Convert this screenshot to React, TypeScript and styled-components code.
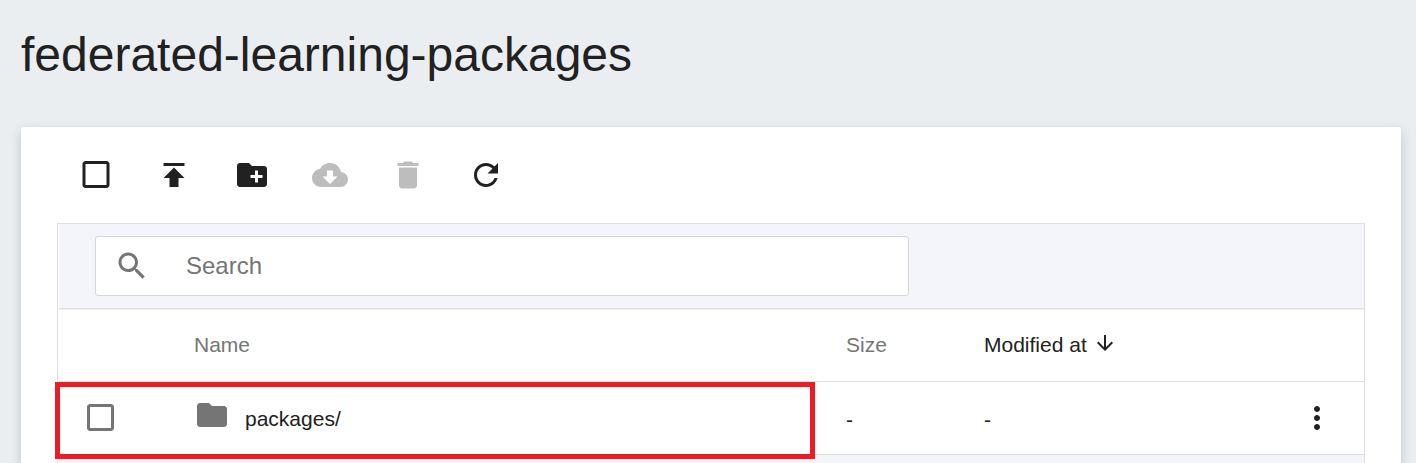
import React from "react";
import styled, { createGlobalStyle } from "styled-components";

const GlobalStyle = createGlobalStyle`
  *, *::before, *::after { box-sizing: border-box; }
  body {
    margin: 0;
    background: #eaeef1;
    color: #212121;
    font-family: "Liberation Sans", Arial, sans-serif;
  }
`;

const Page = styled.main`
  height: 463px;
  overflow: hidden;
  padding: 0 15px 0 21px;
`;

const Title = styled.h1`
  margin: 0;
  height: 127px;
  padding-top: 25px;
  font-size: 48px;
  line-height: 60px;
  font-weight: 400;
  white-space: nowrap;
`;

const Card = styled.section`
  height: 420px;
  padding: 0 36px;
  background: #fff;
  border-radius: 3px;
  box-shadow: 0 4px 12px rgba(0, 0, 0, 0.17);
`;

const Toolbar = styled.div`
  display: flex;
  gap: 42px;
  height: 96px;
  padding: 30px 21px 0;
`;

const IconSvg = styled.svg<{ $size: number }>`
  display: block;
  flex: none;
  width: ${(p) => p.$size}px;
  height: ${(p) => p.$size}px;
  fill: currentColor;
`;

const ToolButton = styled.button`
  display: block;
  width: 36px;
  height: 36px;
  padding: 0;
  border: 0;
  background: none;
  color: #212121;

  &:disabled {
    color: #bdbdbd;
  }
`;

const Table = styled.div`
  height: 300px;
  border: 1px solid #dfdfdf;
  padding-left: 1px;
`;

const SearchBar = styled.div`
  display: flex;
  height: 86px;
  padding: 12px 0 0 36px;
  background: #f4f5fa;
  border-bottom: 1px solid #efefef;
  box-shadow: inset 0 -1px 0 #dfdfdf;
`;

const SearchField = styled.label`
  display: flex;
  align-items: center;
  gap: 36px;
  width: 814px;
  height: 60px;
  padding-left: 18px;
  background: #fff;
  border: 1px solid #d6d6d6;
  border-radius: 3px;
  color: #757575;
`;

const SearchInput = styled.input`
  width: 600px;
  padding: 0;
  border: 0;
  outline: 0;
  background: none;
  font: 24px/30px "Liberation Sans", Arial, sans-serif;

  &::placeholder {
    color: #757575;
    opacity: 1;
  }
`;

const Row = styled.div<{ $height: number }>`
  position: relative;
  display: grid;
  grid-template-columns: 135px 652px 138px 1fr 65px;
  align-items: center;
  height: ${(p) => p.$height}px;
  border-bottom: 1px solid #dfdfdf;
  font-size: 21px;
  line-height: 24px;
`;

const StripedRow = styled.div`
  height: 73px;
  background: #f4f5fa;
`;

const HeaderCell = styled.div<{ $active?: boolean }>`
  display: flex;
  align-items: center;
  gap: 6px;
  padding-bottom: 2px;
  color: ${(p) => (p.$active ? "#212121" : "#757575")};
`;

const SortMark = styled.span`
  margin-bottom: 3px;
`;

const CheckCell = styled.div`
  padding: 0 0 2px 23px;
  color: #757575;
`;

const NameCell = styled.div`
  display: flex;
  align-items: center;
  gap: 15px;
`;

const FolderMark = styled.span`
  margin-bottom: 6px;
  color: #757575;
`;

const NameText = styled.span`
  padding-top: 2px;
`;

const ValueCell = styled.div`
  padding-top: 3px;
`;

const MenuCell = styled.div`
  margin-bottom: 1px;
`;

const Highlight = styled.div`
  position: absolute;
  left: -4px;
  top: 0;
  width: 760px;
  height: 77px;
  border: 5px solid #ed1c24;
  pointer-events: none;
`;

const paths = {
  checkbox:
    "M19 5v14H5V5h14m0-2H5c-1.1 0-2 .9-2 2v14c0 1.1.9 2 2 2h14c1.1 0 2-.9 2-2V5c0-1.1-.9-2-2-2z",
  upload: "M5 4v2h14V4H5zm0 10h4v6h6v-6h4l-7-7-7 7z",
  newFolder:
    "M20 6h-8l-2-2H4c-1.11 0-1.99.89-1.99 2L2 18c0 1.11.89 2 2 2h16c1.11 0 2-.89 2-2V8c0-1.11-.89-2-2-2zm-1 8h-3v3h-2v-3h-3v-2h3V9h2v3h3v2z",
  download:
    "M19.35 10.04C18.67 6.59 15.64 4 12 4 9.11 4 6.6 5.64 5.35 8.04 2.34 8.36 0 10.91 0 14c0 3.31 2.69 6 6 6h13c2.76 0 5-2.24 5-5 0-2.64-2.05-4.78-4.65-4.96zM17 13l-5 5-5-5h3V9h4v4h3z",
  trash: "M6 19c0 1.1.9 2 2 2h8c1.1 0 2-.9 2-2V7H6v12zM19 4h-3.5l-1-1h-5l-1 1H5v2h14V4z",
  refresh:
    "M17.65 6.35C16.2 4.9 14.21 4 12 4c-4.42 0-7.99 3.58-7.99 8s3.57 8 7.99 8c3.73 0 6.84-2.55 7.73-6h-2.08c-.82 2.33-3.04 4-5.65 4-3.31 0-6-2.69-6-6s2.69-6 6-6c1.66 0 3.14.69 4.22 1.78L13 11h7V4l-2.35 2.35z",
  search:
    "M15.5 14h-.79l-.28-.27C15.41 12.59 16 11.11 16 9.5 16 5.91 13.09 3 9.5 3S3 5.91 3 9.5 5.91 16 9.5 16c1.61 0 3.09-.59 4.23-1.57l.27.28v.79l5 4.99L20.49 19l-4.99-5zm-6 0C7.01 14 5 11.99 5 9.5S7.01 5 9.5 5 14 7.01 14 9.5 11.99 14 9.5 14z",
  arrowDown: "M20 12l-1.41-1.41L13 16.17V4h-2v12.17l-5.58-5.59L4 12l8 8 8-8z",
  folder: "M10 4H4c-1.1 0-1.99.9-1.99 2L2 18c0 1.1.9 2 2 2h16c1.1 0 2-.9 2-2V8c0-1.1-.9-2-2-2h-8l-2-2z",
  more: "M12 8c1.1 0 2-.9 2-2s-.9-2-2-2-2 .9-2 2 .9 2 2 2zm0 2c-1.1 0-2 .9-2 2s.9 2 2 2 2-.9 2-2-.9-2-2-2zm0 6c-1.1 0-2 .9-2 2s.9 2 2 2 2-.9 2-2-.9-2-2-2z",
};

type IconName = keyof typeof paths;

function Icon({
  name,
  size = 36,
  viewBox = "0 0 24 24",
}: {
  name: IconName;
  size?: number;
  viewBox?: string;
}) {
  return (
    <IconSvg $size={size} viewBox={viewBox} aria-hidden="true">
      <path d={paths[name]} />
    </IconSvg>
  );
}

const tools: { icon: IconName; label: string; disabled?: boolean; viewBox?: string }[] = [
  { icon: "checkbox", label: "Select all", viewBox: "0 0.333 24 24" },
  { icon: "upload", label: "Upload" },
  { icon: "newFolder", label: "New folder" },
  { icon: "download", label: "Download", disabled: true },
  { icon: "trash", label: "Delete", disabled: true },
  { icon: "refresh", label: "Refresh" },
];

export default function App() {
  return (
    <Page>
      <GlobalStyle />
      <Title>federated-learning-packages</Title>
      <Card>
        <Toolbar>
          {tools.map((t) => (
            <ToolButton key={t.icon} aria-label={t.label} disabled={t.disabled}>
              <Icon name={t.icon} viewBox={t.viewBox} />
            </ToolButton>
          ))}
        </Toolbar>
        <Table>
          <SearchBar>
            <SearchField>
              <Icon name="search" />
              <SearchInput placeholder="Search" />
            </SearchField>
          </SearchBar>
          <Row $height={72}>
            <span />
            <HeaderCell>Name</HeaderCell>
            <HeaderCell>Size</HeaderCell>
            <HeaderCell $active>
              Modified at
              <SortMark>
                <Icon name="arrowDown" size={24} />
              </SortMark>
            </HeaderCell>
          </Row>
          <Row $height={73}>
            <CheckCell>
              <Icon name="checkbox" viewBox="-0.333 -0.333 24 24" />
            </CheckCell>
            <NameCell>
              <FolderMark>
                <Icon name="folder" />
              </FolderMark>
              <NameText>packages/</NameText>
            </NameCell>
            <ValueCell>-</ValueCell>
            <ValueCell>-</ValueCell>
            <MenuCell>
              <Icon name="more" />
            </MenuCell>
            <Highlight />
          </Row>
          <StripedRow />
        </Table>
      </Card>
    </Page>
  );
}
